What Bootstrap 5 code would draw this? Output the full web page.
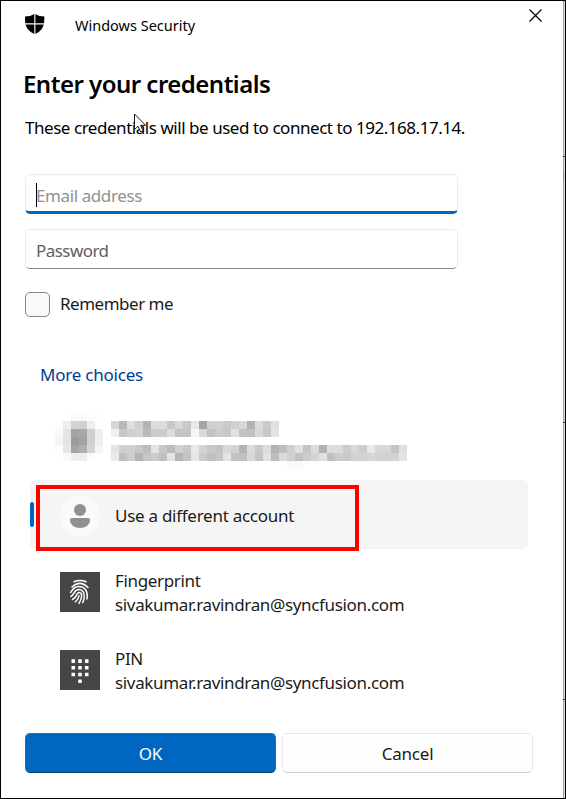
<!DOCTYPE html>
<html lang="en">
<head>
<meta charset="utf-8">
<title>Windows Security</title>
<link href="https://cdn.jsdelivr.net/npm/bootstrap@5.3.0/dist/css/bootstrap.min.css" rel="stylesheet">
<style>
body{font-family:"Noto Sans","Open Sans",sans-serif;font-size:17px;line-height:24px;color:#1b1b1b;background:#fff;overflow:hidden}
.dialog{width:566px;height:799px;border:1px solid #000;padding:0 32px 0 24px}
.edge{right:0;top:0;width:2px;height:797px;background:linear-gradient(#333,#333) 0 155px/2px 1px no-repeat,linear-gradient(#5b9bc8,#5b9bc8) 0 171px/1px 7px no-repeat,linear-gradient(#333,#333) 0 421px/2px 1px no-repeat,linear-gradient(#333,#333) 0 698px/2px 1px no-repeat,linear-gradient(90deg,#a2a2a2 50%,#dcdcdc 50%)}
.titlebar{height:49px;font-size:14.5px;color:#000}
.shield{margin:13px 31px 0 0}
.caption{margin:12px 0 0 -1px}
.close-x{margin:8px -9px 0 0}
.heading{font-size:24px;line-height:34px;font-weight:600;color:#000;margin:17px 0 0 -2px;letter-spacing:-.52px}
.intro{margin-top:15px;color:#000;letter-spacing:-.46px}
.field{width:433px;height:40px;border:1px solid #ececec;border-bottom-color:#868686;border-radius:5px;padding:9px 0 0 10px;color:#606060;letter-spacing:-.55px}
.field.active{border-bottom:3px solid #0067c0;color:#919191;margin-top:34px;letter-spacing:-.4px}
.field.second{margin-top:15px}
.caret{width:1px;height:24px;background:#000;left:10px;top:8px}
.tick{width:25px;height:25px;border:1px solid #868686;border-radius:5px;background:#f9f9f9}
.remember{margin-top:23px;gap:10px;letter-spacing:-.49px}
.remember span{margin-top:-2px}
.more{color:#003e92;margin:46px 0 0 15px;letter-spacing:-.22px}
.hidden-user{margin:26px 0 0 30px;height:56px}
.choice{margin-left:5px;width:498px;height:69px;padding-left:30px;letter-spacing:-.34px}
.choice.selected{background:#f5f5f5;border-radius:5px;margin-top:11px;padding-top:2px;letter-spacing:-.27px}
.pill{left:0;top:22px;width:4px;height:25px;border-radius:2px;background:#0067c0}
.outline{left:6px;top:5px;width:323px;height:66px;border:4px solid #f00}
.tile{width:40px;height:40px;margin-right:15px;flex:none}
.details{padding-top:2px}
.finger{margin-top:8px}
.pin{margin-top:9px}
.actions{margin-top:29px;gap:6px}
.act{height:40px;width:251px;font-size:17px;border-radius:5px;padding:2px 0 0;border:1px solid #e9e9e9;border-bottom-color:#ccc;color:#1b1b1b;background:#fefefe;line-height:36px;letter-spacing:-.2px}
.act.ok{background:#0067c0;border-color:#1473c5;border-bottom-color:#003e73;color:#fff}
.pointer{left:133px;top:112px}
</style>
<script src="https://cdn.jsdelivr.net/npm/bootstrap@5.3.0/dist/js/bootstrap.bundle.min.js"></script>
</head>
<body>
<main class="dialog position-relative">
<div class="edge position-absolute"></div>
<header class="titlebar d-flex align-items-start">
<svg class="shield" width="20" height="21" viewBox="0 0 20 21"><path fill="#000" d="M0 2.5Q5.500 2.500 9.300 0V9.300H.3Q0 7 0 2.500ZM10.400 0Q14 2.500 19.400 2.500Q19.400 7 19 9.300H10.400ZM.5 10.400H9.300V20Q2.500 17 .5 10.400ZM10.400 10.400H18.800Q17 17 10.400 20Z"/></svg>
<span class="caption">Windows Security</span>
<svg class="close-x ms-auto" width="13" height="13" viewBox="0 0 13 13"><path d="M.5.5l12 12M12.500.5l-12 12" stroke="#000" stroke-width="1.200"/></svg>
</header>
<h1 class="heading mb-0">Enter your credentials</h1>
<p class="intro mb-0">These credentials will be used to connect to 192.168.17.14.</p>
<div class="field active position-relative"><i class="caret position-absolute"></i>Email address</div>
<div class="field second">Password</div>
<div class="remember d-flex align-items-center"><i class="tick"></i><span>Remember me</span></div>
<div class="more">More choices</div>
<svg class="hidden-user d-block" id="mosaic" width="352" height="56" shape-rendering="crispEdges"></svg>
<div class="choice selected d-flex align-items-center position-relative">
<i class="pill position-absolute"></i>
<svg class="tile" viewBox="0 0 40 40"><circle cx="20" cy="20" r="20" fill="#fafafa"/><g fill="#909090"><circle cx="20" cy="14" r="6"/><path d="M12 22h16q2 0 2 2c0 5-5 8-10 8s-10-3-10-8q0-2 2-2Z"/></g></svg>
<span>Use a different account</span>
<i class="outline position-absolute"></i>
</div>
<div class="choice finger d-flex align-items-center">
<svg class="tile" viewBox="0 0 40 40"><rect width="40" height="40" fill="#464646"/><g fill="none" stroke="#fff" stroke-width="1.500" stroke-linecap="round"><path d="M14 9.700q6-2.500 12 0M12 15q8-7.500 16 .5M10.700 20.500c2-4 4.500-6 8-6 6 0 9.500 4.500 8.300 12.500M10.800 24.500c4-2 3-7 8-7 4 0 6 3.500 5.300 8.500q-.3 2.500-1.300 4.500M12.500 27.500c5-2 3.500-7 6.500-7 2.300 0 3 2 2.500 4.500q-.5 3.500-2.500 6.300M15.500 29.700q3-2.200 3.500-6"/></g></svg>
<div class="details"><div>Fingerprint</div><div>sivakumar.ravindran@syncfusion.com</div></div>
</div>
<div class="choice pin d-flex align-items-center">
<svg class="tile" viewBox="0 0 40 40"><rect width="40" height="40" fill="#464646"/><path fill="#fff" d="M11.500 9.300h3.600v3.600h-3.600zm6.700 0h3.600v3.600h-3.600zm6.700 0h3.600v3.600h-3.600zM11.500 16h3.600v3.600h-3.600zm6.700 0h3.600v3.600h-3.600zm6.700 0h3.600v3.600h-3.600zM11.500 22.700h3.600v3.600h-3.600zm6.700 0h3.600v3.600h-3.600zm6.700 0h3.600v3.600h-3.600zM18.200 29.400h3.600v3.600h-3.600z"/></svg>
<div class="details"><div>PIN</div><div>sivakumar.ravindran@syncfusion.com</div></div>
</div>
<div class="actions d-flex"><button class="btn act ok">OK</button><button class="btn act">Cancel</button></div>
<svg class="pointer position-absolute" width="13" height="21" viewBox="0 0 13 21"><path d="M.5 1v15.500l3.600-3.300 2.500 5.800 2.500-1-2.500-5.700h5Z" fill="#fff" stroke="#1a1a2a"/></svg>
</main>
<script>
// Pixelated account row: [column, row, grey levels in hex pairs], 8px cells
const rows=[[2,0,'f9f9fdfd'],[0,1,'fdeed4d0eefd'],[0,2,'f9e4a4a8d0ee'],[0,3,'f5e49ca4d0ee'],[0,4,'fce6a4b0d4f5'],[1,5,'f9eeeefb'],
[7,1,'d8b8e0d0b5dcdcc8d8c8e8a4d0d0c8d0d8b2dccce0'],[7,2,'f0c8cfd3bbccccdcc4c4f6d8c2ccc8e0c2c0d6c8e4'],
[7,4,'e4d0d0c8bce4c8bcd0c8e8d4c8c4d8d4b4dccadcb4c0d0e2c4dcb2dcdcccd8ccead8d8c4e0'],
[7,5,'eac0ccb4c6ccc0e4b6c4e6ccc0c6e4c2c0d8c4e2bcdcd0c2ccd4e0c0ccc8d2d2d6d2d2d2e4'],[29,6,'fafa']];
const svg=document.getElementById('mosaic');
for(const [c,r,s] of rows)s.match(/../g).forEach((g,i)=>{const e=document.createElementNS('http://www.w3.org/2000/svg','rect');
for(const [k,v] of Object.entries({x:(c+i)*8,y:r*8,width:8,height:8,fill:'#'+g+g+g}))e.setAttribute(k,v);svg.append(e)});
</script>
</body>
</html>
